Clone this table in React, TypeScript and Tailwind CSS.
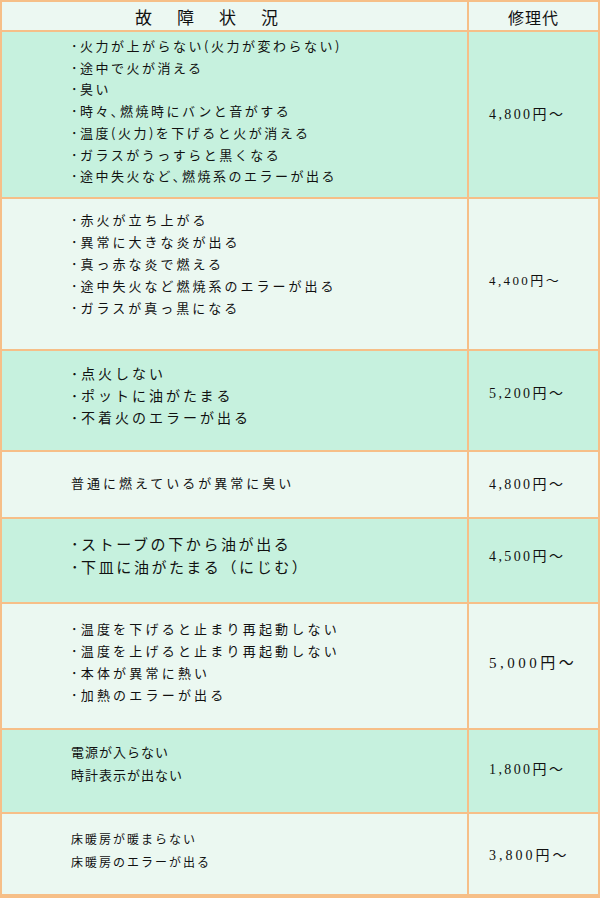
const JP = { fontFamily: '"Noto Sans CJK JP", "Noto Sans", sans-serif' }

interface Row {
  readonly lines: string[]
  readonly price: string
  readonly rowClass: string
  readonly textClass: string
  readonly priceClass: string
}

const DARK = 'bg-[#c6f1de]'
const LIGHT = 'bg-[#ebf8f1]'

const ROWS: Row[] = [
  {
    lines: [
      '･火力が上がらない(火力が変わらない)',
      '･途中で火が消える',
      '･臭い',
      '･時々､燃焼時にバンと音がする',
      '･温度(火力)を下げると火が消える',
      '･ガラスがうっすらと黒くなる',
      '･途中失火など､燃焼系のエラーが出る',
    ],
    price: '4,800円～',
    rowClass: `h-[167px] ${DARK}`,
    textClass: 'pt-[3px] text-[13px] tracking-[2.5px] leading-[21.7px]',
    priceClass: 'text-[14px] tracking-[2.4px]',
  },
  {
    lines: [
      '･赤火が立ち上がる',
      '･異常に大きな炎が出る',
      '･真っ赤な炎で燃える',
      '･途中失火など燃焼系のエラーが出る',
      '･ガラスが真っ黒になる',
    ],
    price: '4,400円～',
    rowClass: `h-[152px] ${LIGHT}`,
    textClass: 'pt-[10px] text-[13px] tracking-[3px] leading-[22px]',
    priceClass: 'text-[13px] tracking-[2.4px] pt-[14px]',
  },
  {
    lines: ['･点火しない', '･ポットに油がたまる', '･不着火のエラーが出る'],
    price: '5,200円～',
    rowClass: `h-[101px] ${DARK}`,
    textClass: 'pt-[11px] text-[14px] tracking-[3px] leading-[22px]',
    priceClass: 'text-[14px] tracking-[2.4px] pb-[14px]',
  },
  {
    lines: ['普通に燃えているが異常に臭い'],
    price: '4,800円～',
    rowClass: `h-[67px] ${LIGHT}`,
    textClass: 'pt-[20px] text-[13px] tracking-[3px] leading-[22px]',
    priceClass: 'text-[14px] tracking-[2.4px]',
  },
  {
    lines: ['･ストーブの下から油が出る', '･下皿に油がたまる（にじむ）'],
    price: '4,500円～',
    rowClass: `h-[85px] ${DARK}`,
    textClass: 'pt-[13px] text-[15px] tracking-[2.6px] leading-[23px]',
    priceClass: 'text-[14px] tracking-[2.4px] pb-[8px]',
  },
  {
    lines: [
      '･温度を下げると止まり再起動しない',
      '･温度を上げると止まり再起動しない',
      '･本体が異常に熱い',
      '･加熱のエラーが出る',
    ],
    price: '5,000円～',
    rowClass: `h-[126px] ${LIGHT}`,
    textClass: 'pt-[14px] text-[13px] tracking-[3.2px] leading-[22px]',
    priceClass: 'text-[15px] tracking-[3.5px] pb-[6px]',
  },
  {
    lines: ['電源が入らない', '時計表示が出ない'],
    price: '1,800円～',
    rowClass: `h-[84px] ${DARK}`,
    textClass: 'pt-[10px] text-[13px] tracking-[1px] leading-[23px]',
    priceClass: 'text-[14px] tracking-[2.4px] pb-[4px]',
  },
  {
    lines: ['床暖房が暖まらない', '床暖房のエラーが出る'],
    price: '3,800円～',
    rowClass: `h-[82px] ${LIGHT} border-b-0`,
    textClass: 'pt-[13px] text-[12px] tracking-[2px] leading-[23px]',
    priceClass: 'text-[14px] tracking-[3px] pt-[2px]',
  },
]

export default function App() {
  return (
    <div className="w-[600px] h-[898px] border-2 border-[#f6bf88] text-[#111]" style={JP}>
      {/* Header */}
      <div className="flex h-[30px] border-b-2 border-[#f6bf88] bg-[#ecf8f2]">
        <div className="w-[467px] border-r-2 border-[#f6bf88] pl-[133px] pt-[2px] text-[17px] tracking-[4px] leading-[26px]">
          故　障　状　況
        </div>
        <div className="flex-1 text-center pt-[2px] text-[16px] tracking-[1px] leading-[26px]">修理代</div>
      </div>

      {ROWS.map((row, i) => (
        <div key={i} className={`flex border-b-2 border-[#f6bf88] ${row.rowClass}`}>
          <div className={`w-[467px] border-r-2 border-[#f6bf88] pl-[69px] whitespace-nowrap ${row.textClass}`}>
            {row.lines.map(l => (
              <div key={l}>{l}</div>
            ))}
          </div>
          <div
            className={`flex-1 flex items-center pl-[20px] whitespace-nowrap ${row.priceClass}`}
            style={{ fontFamily: '"Liberation Serif", "Noto Sans CJK JP", serif' }}
          >
            {row.price}
          </div>
        </div>
      ))}
    </div>
  )
}
